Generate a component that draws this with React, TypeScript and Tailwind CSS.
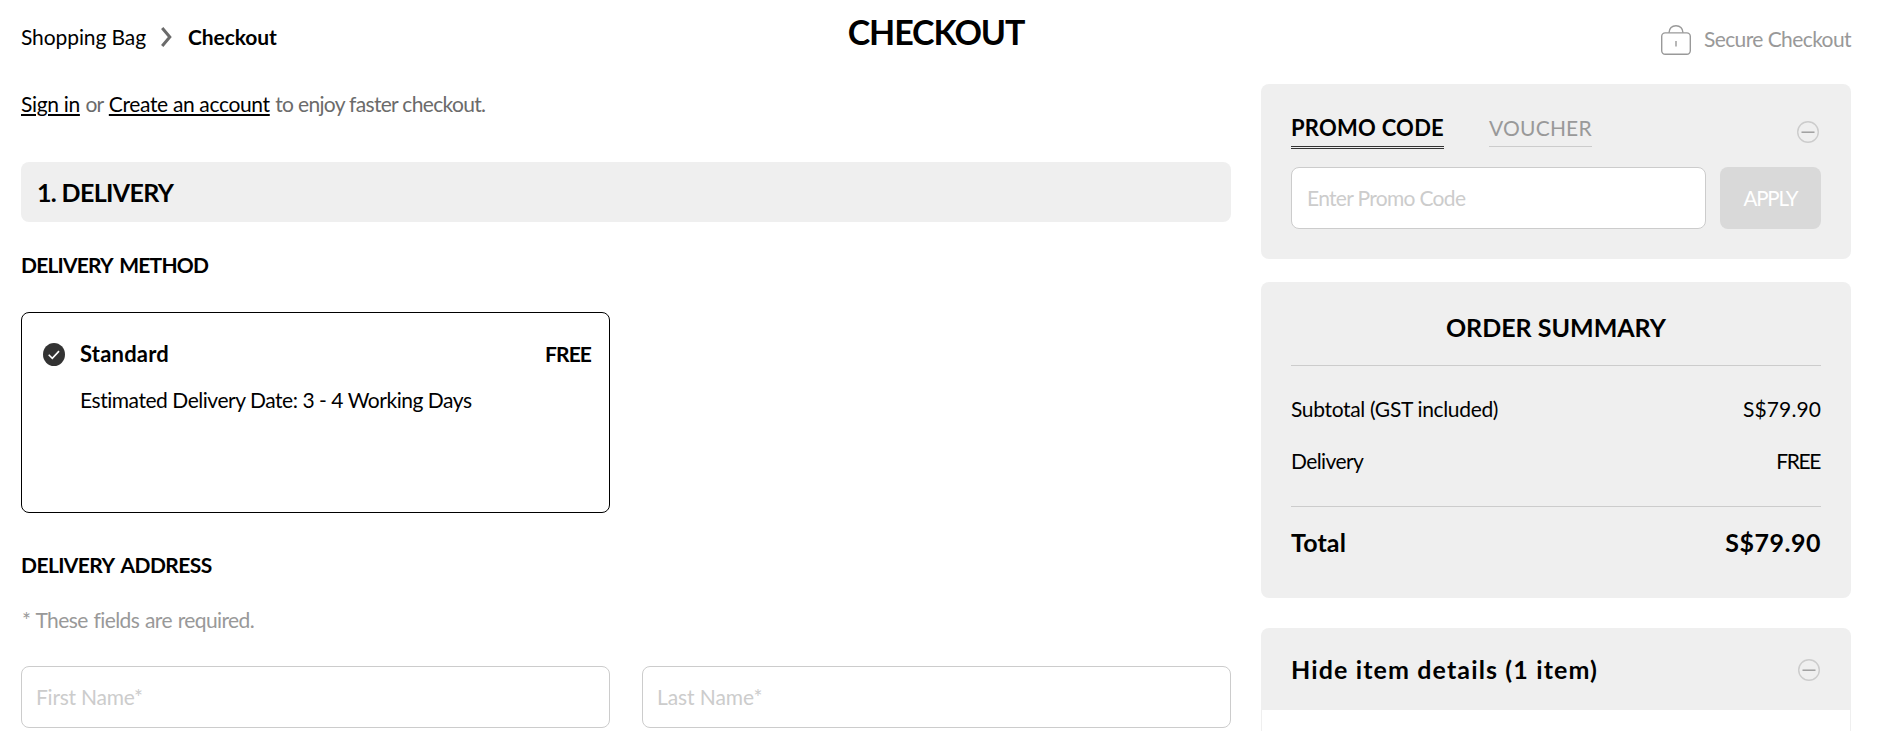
import React, { useState } from 'react';

const MinusIcon = () => (
  <svg width="22" height="22" viewBox="0 0 22 22" fill="none" className="flex-shrink-0">
    <circle cx="11" cy="11" r="10.3" stroke="#cccccc" strokeWidth="1.4" />
    <path d="M4.5 11.2h13" stroke="#999999" strokeWidth="1.4" />
  </svg>
);

const LockIcon = () => (
  <svg width="30" height="30" viewBox="0 0 30 30" fill="none" stroke="#999999" strokeWidth="1.4">
    <rect x="0.7" y="7.9" width="28.6" height="21.4" rx="3.5" />
    <path d="M8 7.7C8.4 3.6 11 0.8 15 0.8s6.6 2.8 7 6.9" />
    <path d="M15 16v5.5" />
  </svg>
);

const CheckIcon = () => (
  <svg width="22" height="23" viewBox="0 0 22 23" fill="none" className="flex-shrink-0">
    <ellipse cx="11" cy="11.5" rx="11" ry="11.5" fill="#333333" />
    <path d="M5.7 11.8l3.6 3.6 6.7-7.3" stroke="#ffffff" strokeWidth="1.6" />
  </svg>
);

const ChevronIcon = () => (
  <svg width="11" height="20" viewBox="0 0 11 20" fill="none">
    <path d="M1.2 1l7.6 9-7.6 9" stroke="#6b6b6b" strokeWidth="3" />
  </svg>
);

const inputClass =
  'h-[62px] rounded-lg border border-[#cccccc] bg-white pb-0.5 text-[21px] outline-none placeholder:text-[#cccccc]';

const App: React.FC = () => {
  const [promo, setPromo] = useState('');

  return (
    <div className="h-screen overflow-hidden bg-white pl-[21px] pr-[26px] font-['Lato',sans-serif] text-[21px] leading-[30px] text-black">
      {/* Header */}
      <header className="grid h-[84px] grid-cols-3">
        <nav className="flex h-[30px] items-center mt-[22px]">
          <a href="#" className="tracking-[-0.1px]">Shopping Bag</a>
          <span className="ml-[15px] mr-4">
            <ChevronIcon />
          </span>
          <span className="font-bold tracking-[-0.1px]">Checkout</span>
        </nav>
        <h1 className="mt-3 text-center text-[34px] leading-[40px] font-bold tracking-[-1.1px]">CHECKOUT</h1>
        <div className="mt-[25px] flex h-[30px] items-center justify-end gap-[13px] text-[#999999]">
          <LockIcon />
          <span className="mb-0.5 tracking-[-0.59px]">Secure Checkout</span>
        </div>
      </header>

      <div className="flex gap-[30px]">
        {/* Delivery form */}
        <main className="w-[1210px] flex-shrink-0">
          <p className="mt-[5px] flex gap-[5.5px] text-[#6b6b6b]">
            <a href="#" className="text-black underline decoration-2 underline-offset-2 tracking-[-0.32px]">Sign in</a>
            <span className="tracking-[-0.8px]">or</span>
            <a href="#" className="text-black underline decoration-2 underline-offset-2 tracking-[-0.35px]">Create an account</a>
            <span className="tracking-[-0.67px]">to enjoy faster checkout.</span>
          </p>

          <h2 className="mt-[43px] flex h-[60px] items-center rounded-lg bg-[#efefef] pl-4 text-[25px] font-bold tracking-[-0.65px]">
            1. DELIVERY
          </h2>

          <h3 className="mt-7 font-bold tracking-[-0.8px] [word-spacing:3px]">DELIVERY METHOD</h3>
          <div className="mt-8 h-[201px] w-[589px] rounded-lg border border-black pt-[26px] pl-[21px] pr-[18px]">
            <div className="flex items-center font-bold">
              <span className="mt-px">
                <CheckIcon />
              </span>
              <span className="ml-[15px] flex-1 text-[22px] tracking-[0.2px]">Standard</span>
              <span className="tracking-[-0.9px]">FREE</span>
            </div>
            <p className="mt-4 ml-[37px] tracking-[-0.46px]">Estimated Delivery Date: 3 - 4 Working Days</p>
          </div>

          <h3 className="mt-[37px] font-bold tracking-[-0.58px] [word-spacing:3px]">DELIVERY ADDRESS</h3>
          <p className="mt-[25px] pl-px tracking-[-0.6px] text-[#999999] [word-spacing:1px]">* These fields are required.</p>
          <div className="mt-[31px] grid grid-cols-2 gap-8">
            <input className={`${inputClass} pl-3.5 tracking-[-0.24px]`} placeholder="First Name*" />
            <input className={`${inputClass} pl-3.5 tracking-[-0.08px]`} placeholder="Last Name*" />
          </div>
        </main>

        <aside className="w-[590px] flex-shrink-0">
          {/* Promo code */}
          <section className="h-[175px] rounded-lg bg-[#efefef] px-[30px] pt-7">
            <div className="flex items-start">
              <button className="h-[37px] border-b-3 border-double border-[#333333] pb-[3px] text-[22px] leading-[31px] font-bold tracking-[0.24px]">
                PROMO CODE
              </button>
              <button className="ml-[45px] h-[35px] border-b border-[#cccccc] pb-[3px] leading-[31px] tracking-[0.2px] text-[#999999]">
                VOUCHER
              </button>
              <button className="mt-[9px] mr-0.5 ml-auto">
                <MinusIcon />
              </button>
            </div>
            <div className="mt-[18px] flex gap-3.5">
              <input
                className={`${inputClass} w-[415px] pl-[15px] tracking-[-0.68px]`}
                placeholder="Enter Promo Code"
                value={promo}
                onChange={(e) => setPromo(e.target.value)}
              />
              <button className="h-[62px] w-[101px] rounded-lg bg-[#d9d9d9] text-[20.5px] tracking-[-1.2px] text-white">APPLY</button>
            </div>
          </section>

          {/* Order summary */}
          <section className="mt-[23px] h-[316px] rounded-lg bg-[#efefef] px-[30px] pt-[30px]">
            <h2 className="border-b border-[#cccccc] pb-[23px] text-center text-[25px] leading-[30px] font-bold">ORDER SUMMARY</h2>
            <div className="mt-7 flex justify-between">
              <span className="tracking-[-0.33px]">Subtotal (GST included)</span>
              <span className="tracking-[0.1px]">S$79.90</span>
            </div>
            <div className="mt-[22px] flex justify-between border-b border-[#cccccc] pb-[30px]">
              <span className="tracking-[-0.6px]">Delivery</span>
              <span className="pr-px tracking-[-1.4px]">FREE</span>
            </div>
            <div className="mt-5 flex justify-between text-[25px] font-bold">
              <span className="tracking-[0.14px]">Total</span>
              <span className="tracking-[0.5px]">S$79.90</span>
            </div>
          </section>

          {/* Item details */}
          <section className="mt-[30px]">
            <div className="flex h-[82px] items-center justify-between rounded-t-lg bg-[#efefef] pr-[31px] pl-[30px]">
              <h2 className="text-[25px] font-bold tracking-[1.13px]">Hide item details (1 item)</h2>
              <span className="mt-0.5">
                <MinusIcon />
              </span>
            </div>
            <div className="h-24 border border-t-0 border-[#efefef]" />
          </section>
        </aside>
      </div>
    </div>
  );
};

export default App;
